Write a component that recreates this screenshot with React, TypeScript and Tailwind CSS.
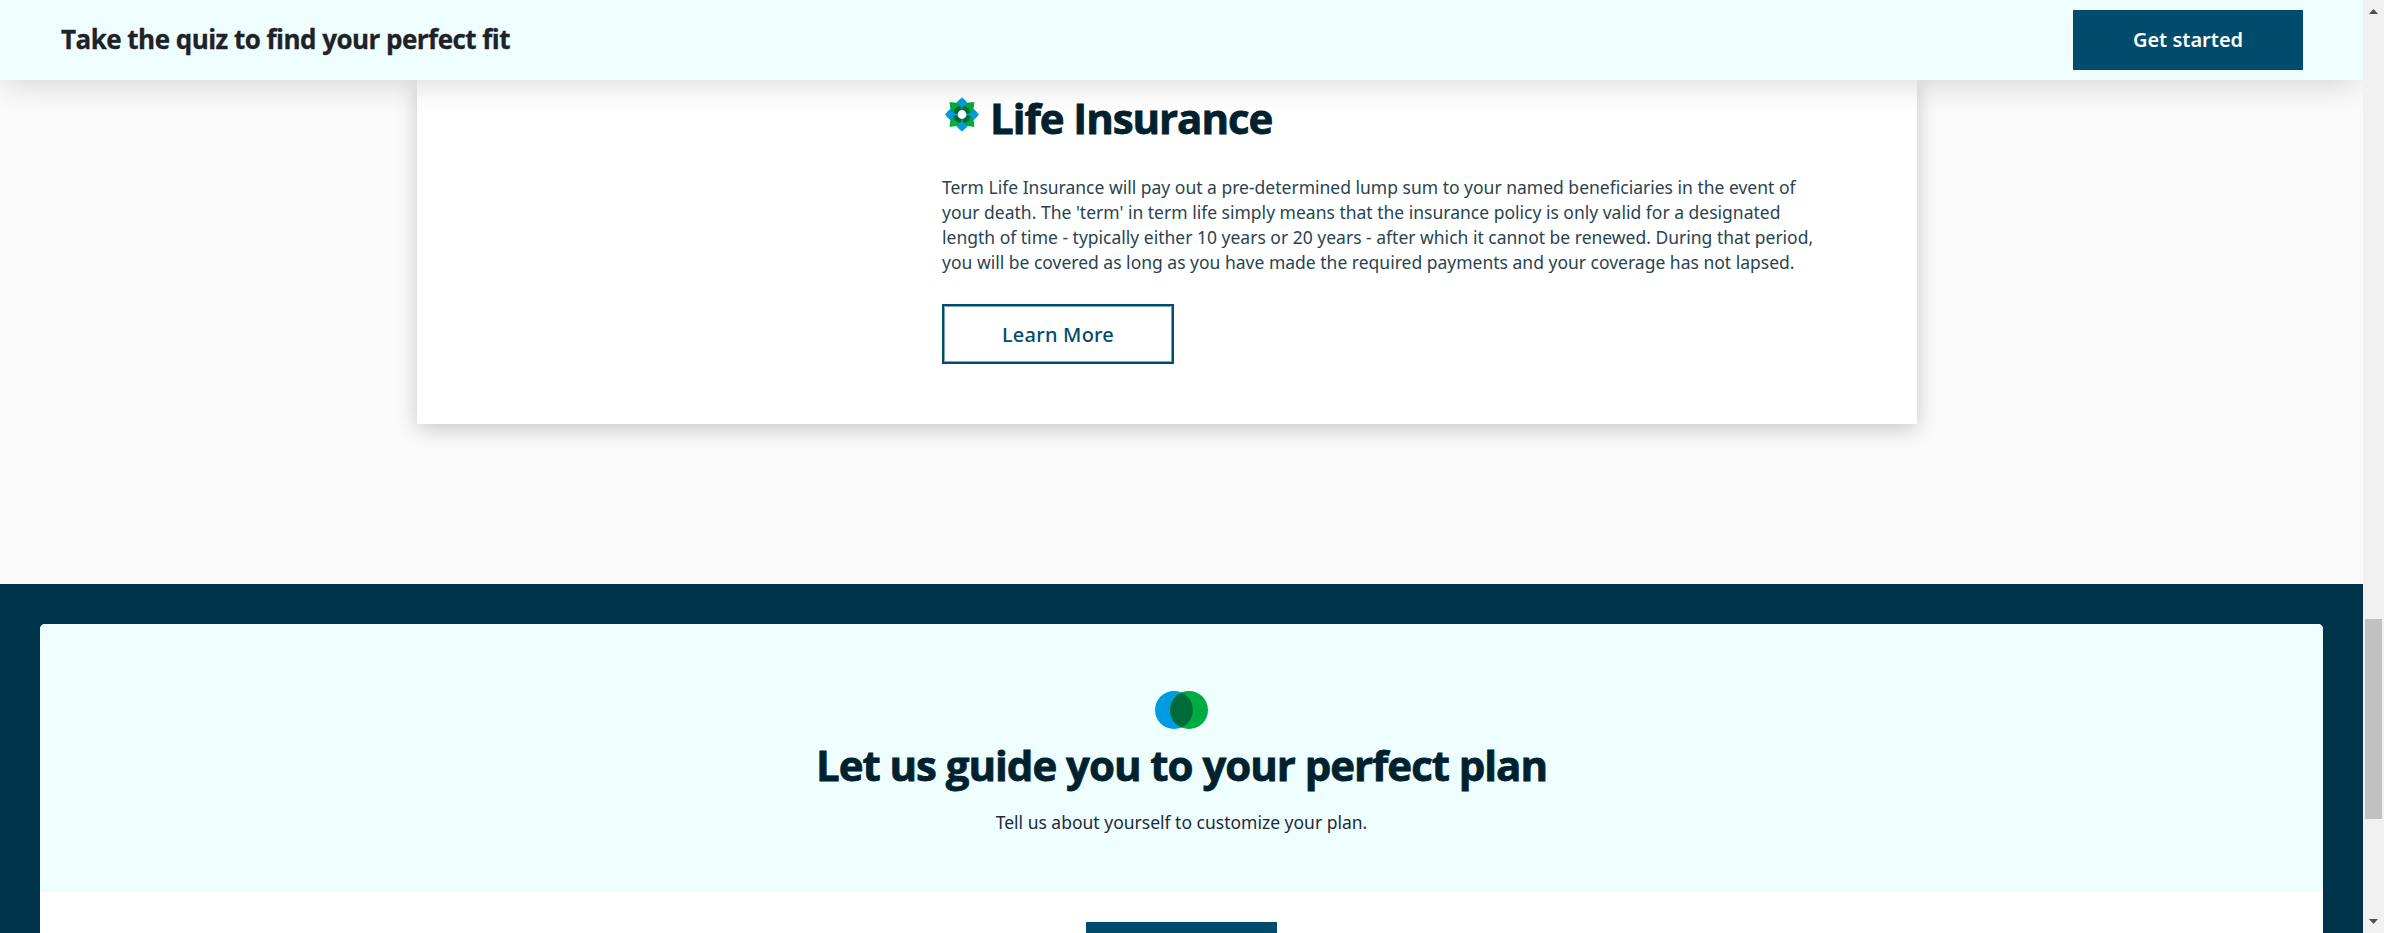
const heading = "font-['Open_Sans',sans-serif] font-bold whitespace-nowrap";
const bluePetal = "M0-17C2.8-14.5 6-12.5 6-9.8C5.8-6 2.4-2.4 0 0C-2.4-2.4-5.8-6-6-9.8C-6-12.5-2.8-14.5 0-17Z";
const greenPetal = "M0-17.6C2.2-14.4 5.2-12.2 5.2-9C5-5.5 2.4-2.4 0 0C-2.4-2.4-5-5.5-5.2-9C-5.2-12.2-2.2-14.4 0-17.6Z";
const darkPetal = "M0-9.5C1.6-8.4 4-8.2 4.7-7.2C4.4-5 2-2 0 0C-2-2-4.4-5-4.7-7.2C-4-8.2-1.6-8.4 0-9.5Z";
const straight = [0, 90, 180, 270];
const diagonal = [45, 135, 225, 315];

function Flower() {
  return (
    <svg className="mt-[11px] ml-[3px] h-[35px] w-[34px] shrink-0" viewBox="-17 -17.5 34 35">
      {straight.map((a) => <path key={a} transform={`rotate(${a})`} fill="#009be0" d={bluePetal} />)}
      {diagonal.map((a) => (
        <g key={a} transform={`rotate(${a})`}>
          <path fill="#00ab41" d={greenPetal} />
          <path fill="#006b3a" d={darkPetal} />
        </g>
      ))}
      <circle r="4.4" fill="#fff" />
    </svg>
  );
}

function Rings() {
  return (
    <svg className="h-[38px] w-[53px]" viewBox="0 0 53 38">
      <circle cx="19" cy="19" r="19" fill="#009be0" />
      <circle cx="34" cy="19" r="19" fill="#00ab41" />
      <path d="M26.5 1.54A19 19 0 0 1 26.5 36.46A19 19 0 0 1 26.5 1.54Z" fill="#006b3a" />
    </svg>
  );
}

function Scrollbar() {
  return (
    <div className="flex h-full w-[21px] shrink-0 flex-col items-center bg-[#f1f1f1]">
      <svg className="mt-[9px] h-[5px] w-[9px]" viewBox="0 0 9 5"><path d="M4.5 0L9 5H0Z" fill="#505050" /></svg>
      <div className="mt-[605px] h-[200px] w-[17px] bg-[#c1c1c1]" />
      <svg className="mt-[100px] h-[5px] w-[9px]" viewBox="0 0 9 5"><path d="M0 0H9L4.5 5Z" fill="#505050" /></svg>
    </div>
  );
}

export default function App() {
  return (
    <div className="flex h-[933px] w-[2384px] overflow-hidden font-['Noto_Sans',sans-serif]">
      <div className="flex w-[2363px] flex-col overflow-hidden bg-[#fafafa]">
        <header className="z-10 flex h-20 shrink-0 items-center justify-between bg-[#eefeff] pr-[60px] pl-[61px] shadow-[0_10px_30px_-5px_rgba(0,0,0,0.15)]">
          <h3 className={`${heading} pb-0.5 text-[26px] tracking-[-0.53px] text-[#212128] [-webkit-text-stroke:0.3px]`}>Take the quiz to find your perfect fit</h3>
          <button className="h-[60px] w-[230px] bg-[#004c6c] text-[20px] font-semibold text-white">Get started</button>
        </header>
        <section className="h-[504px] shrink-0 pl-[417px]">
          <div className="h-[344px] w-[1500px] bg-white pt-[6px] pl-[525px] shadow-[0_5px_20px_rgba(0,0,0,0.2)]">
            <div className="flex h-[72px]">
              <Flower />
              <h2 className={`${heading} ml-[11px] pt-[2px] text-[42px] leading-[60px] tracking-[-1.05px] text-[#00212e] [-webkit-text-stroke:0.8px]`}>Life Insurance</h2>
            </div>
            <p className="mt-[17px] text-[17.5px] leading-[25px] whitespace-nowrap text-[#29444f]">
              Term Life Insurance will pay out a pre-determined lump sum to your named beneficiaries in the event of<br />
              your death. The 'term' in term life simply means that the insurance policy is only valid for a designated<br />
              length of time - typically either 10 years or 20 years - after which it cannot be renewed. During that period,<br />
              you will be covered as long as you have made the required payments and your coverage has not lapsed.
            </p>
            <button className="mt-[29px] h-[60px] w-[232px] border-2 border-[#004c6c] pt-0.5 text-[20px] font-medium tracking-[0.22px] text-[#004c6c] shadow-[inset_0_0_0_1px_#80a5b5]">Learn More</button>
          </div>
        </section>
        <section className="flex-1 bg-[#00344b] px-10 pt-10">
          <div className="flex h-[340px] flex-col items-center overflow-hidden rounded-t-[5px] bg-white">
            <div className="flex h-[268px] w-full shrink-0 flex-col items-center bg-[#eefeff] pt-[67px]">
              <Rings />
              <h2 className={`${heading} mt-[6px] text-[42px] leading-[60px] tracking-[-1.03px] text-[#00212e] [-webkit-text-stroke:0.8px]`}>Let us guide you to your perfect plan</h2>
              <p className="mt-[15px] text-[17.5px] leading-[25px] text-[#1f2a38]">Tell us about yourself to customize your plan.</p>
            </div>
            <div className="mt-[30px] h-[60px] w-[191px] shrink-0 bg-[#004c6c]" />
          </div>
        </section>
      </div>
      <Scrollbar />
    </div>
  );
}
